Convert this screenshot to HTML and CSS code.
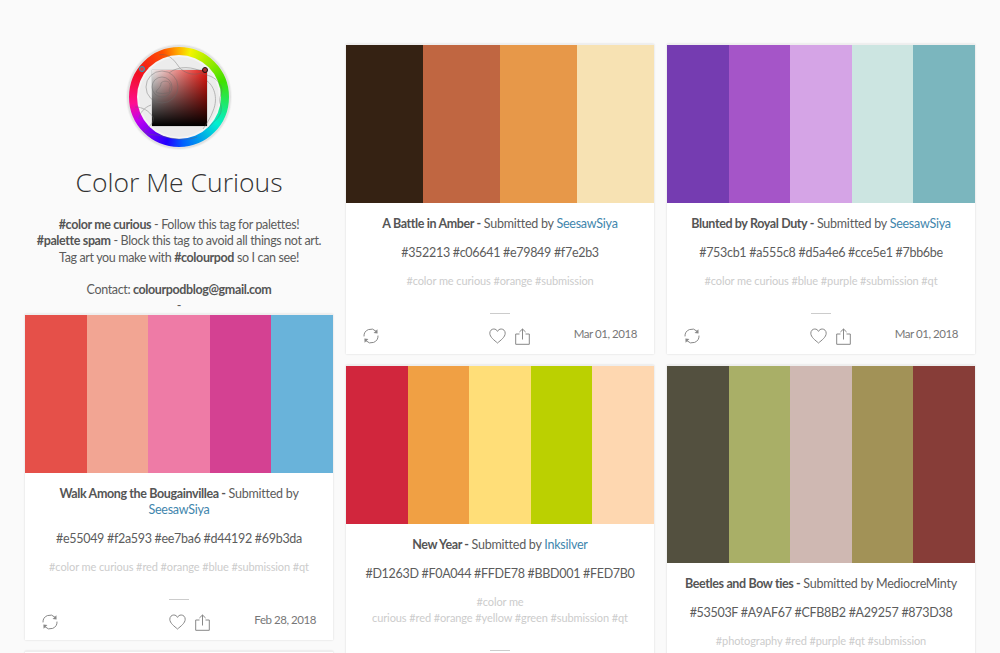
FILE: index.html
```html
<!DOCTYPE html>
<html lang="en">

<head>
  <meta charset="UTF-8">
  <meta name="viewport" content="width=device-width, initial-scale=1.0">
  <title>Color Me Curious</title>
  <link rel="stylesheet" href="styles.css">
</head>

<body>
  <svg class="icon-defs" width="0" height="0">
    <symbol id="i-reblog" viewBox="0 0 16 16">
      <path d="M1 8.400A7 7 0 0 1 13.200 3.400" />
      <path d="M15 7.600A7 7 0 0 1 2.800 12.600" />
      <path class="solid" d="M14.400 1.200 14.600 5.400 10.600 5Z" />
      <path class="solid" d="M1.600 14.800 1.400 10.600 5.400 11Z" />
    </symbol>
    <symbol id="i-heart" viewBox="0 0 17 16">
      <path d="M8.500 15C5.500 12.400.8 9.200.8 5.200.8 2.800 2.600 1 4.800 1c1.600 0 3 .9 3.700 2.400C9.200 1.900 10.600 1 12.200 1c2.200 0 4 1.800 4 4.200 0 4-4.700 7.200-7.700 9.800Z" />
    </symbol>
    <symbol id="i-share" viewBox="0 0 15 17">
      <path d="M4.500 6H.7v10.300h13.600V6h-3.800" />
      <path d="M7.500 11.500V1" />
      <path d="M4.400 4 7.500 1l3.100 3" />
    </symbol>
  </svg>

  <div class="page">
    <!-- left column, blog header first -->
    <div class="column">
      <div class="blog-head">
        <div class="logo">
          <div class="logo-ring"></div>
          <div class="logo-disc"></div>
          <div class="logo-square"></div>
          <svg class="logo-lines" viewBox="0 0 104 104">
            <circle cx="35" cy="42" r="16" />
            <circle cx="35" cy="42" r="10" />
            <path d="M34 38c3-3 8-2 9 1 1 4-2 5 0 8-4 2-11 2-14 0 1-3 5-4 5-9Z" />
            <path d="M32 10c8-2 14 3 20 12 5 6 14 9 22 6 6 3 14 2 20 13 3 8-4 10 0 20 2 10-6 14-13 22" />
            <path d="M42 28c10-8 24-6 34-1" />
            <path d="M80 36c6 4 12 16 6 30-2 6-6 12-10 18" />
            <path d="M8 62c8 0 14 4 18 10 2 6-6 12-10 14 6 6 14 2 22 6 10 2 22 4 32 0" />
            <path d="M24 60c-6 2-12 8-12 14" />
          </svg>
          <span class="logo-handle logo-handle-a"></span>
          <span class="logo-handle logo-handle-b"></span>
        </div>
        <h1 class="blog-title">Color Me Curious</h1>
        <p class="blog-desc">
          <b>#color me curious</b> - Follow this tag for palettes!<br>
          <b>#palette spam</b> - Block this tag to avoid all things not art.<br>
          Tag art you make with <b>#colourpod</b> so I can see!<br>
          <br>
          Contact: <b>colourpodblog@gmail.com</b><br>
          -
        </p>
      </div>

      <div class="card">
        <div class="swatches">
          <div class="swatch c-e55049"></div>
          <div class="swatch c-f2a593"></div>
          <div class="swatch c-ee7ba6"></div>
          <div class="swatch c-d44192"></div>
          <div class="swatch c-69b3da"></div>
        </div>
        <div class="card-body">
          <p class="card-title"><b>Walk Among the Bougainvillea -</b> Submitted by <a href="#">SeesawSiya</a></p>
          <p class="card-hex">#e55049 #f2a593 #ee7ba6 #d44192 #69b3da</p>
          <p class="card-tags">#color me curious #red #orange #blue #submission #qt</p>
          <div class="card-rule"></div>
          <div class="card-foot">
            <svg class="icon icon-reblog"><use href="#i-reblog" /></svg>
            <div class="foot-actions">
              <svg class="icon icon-heart"><use href="#i-heart" /></svg>
              <svg class="icon icon-share"><use href="#i-share" /></svg>
            </div>
            <span class="card-date">Feb 28, 2018</span>
          </div>
        </div>
      </div>

      <div class="card card-next"></div>
    </div>

    <!-- middle column -->
    <div class="column">
      <div class="card">
        <div class="swatches">
          <div class="swatch c-352213"></div>
          <div class="swatch c-c06641"></div>
          <div class="swatch c-e79849"></div>
          <div class="swatch c-f7e2b3"></div>
        </div>
        <div class="card-body">
          <p class="card-title"><b>A Battle in Amber -</b> Submitted by <a href="#">SeesawSiya</a></p>
          <p class="card-hex">#352213 #c06641 #e79849 #f7e2b3</p>
          <p class="card-tags">#color me curious #orange #submission</p>
          <div class="card-rule"></div>
          <div class="card-foot">
            <svg class="icon icon-reblog"><use href="#i-reblog" /></svg>
            <div class="foot-actions">
              <svg class="icon icon-heart"><use href="#i-heart" /></svg>
              <svg class="icon icon-share"><use href="#i-share" /></svg>
            </div>
            <span class="card-date">Mar 01, 2018</span>
          </div>
        </div>
      </div>

      <div class="card">
        <div class="swatches">
          <div class="swatch c-d1263d"></div>
          <div class="swatch c-f0a044"></div>
          <div class="swatch c-ffde78"></div>
          <div class="swatch c-bbd001"></div>
          <div class="swatch c-fed7b0"></div>
        </div>
        <div class="card-body">
          <p class="card-title"><b>New Year -</b> Submitted by <a href="#">Inksilver</a></p>
          <p class="card-hex">#D1263D #F0A044 #FFDE78 #BBD001 #FED7B0</p>
          <p class="card-tags">#color me<br>curious #red #orange #yellow #green #submission #qt</p>
          <div class="card-rule"></div>
        </div>
      </div>
    </div>

    <!-- right column -->
    <div class="column">
      <div class="card">
        <div class="swatches">
          <div class="swatch c-753cb1"></div>
          <div class="swatch c-a555c8"></div>
          <div class="swatch c-d5a4e6"></div>
          <div class="swatch c-cce5e1"></div>
          <div class="swatch c-7bb6be"></div>
        </div>
        <div class="card-body">
          <p class="card-title"><b>Blunted by Royal Duty -</b> Submitted by <a href="#">SeesawSiya</a></p>
          <p class="card-hex">#753cb1 #a555c8 #d5a4e6 #cce5e1 #7bb6be</p>
          <p class="card-tags">#color me curious #blue #purple #submission #qt</p>
          <div class="card-rule"></div>
          <div class="card-foot">
            <svg class="icon icon-reblog"><use href="#i-reblog" /></svg>
            <div class="foot-actions">
              <svg class="icon icon-heart"><use href="#i-heart" /></svg>
              <svg class="icon icon-share"><use href="#i-share" /></svg>
            </div>
            <span class="card-date">Mar 01, 2018</span>
          </div>
        </div>
      </div>

      <div class="card">
        <div class="swatches swatches-tall">
          <div class="swatch c-53503f"></div>
          <div class="swatch c-a9af67"></div>
          <div class="swatch c-cfb8b2"></div>
          <div class="swatch c-a29257"></div>
          <div class="swatch c-873d38"></div>
        </div>
        <div class="card-body">
          <p class="card-title"><b>Beetles and Bow ties -</b> Submitted by MediocreMinty</p>
          <p class="card-hex">#53503F #A9AF67 #CFB8B2 #A29257 #873D38</p>
          <p class="card-tags">#photography #red #purple #qt #submission</p>
          <div class="card-rule"></div>
        </div>
      </div>
    </div>
  </div>
</body>

</html>
```

FILE: styles.css
```css
html,
body {
  margin: 0;
  height: 100%;
  overflow: hidden;
}

body {
  background-color: #fafafa;
  color: #5c5c5c;
  font-family: "Lato", "Open Sans", sans-serif;
  font-size: 12.5px;
}

.icon-defs {
  display: block;
}

/* three fixed columns */
.page {
  display: flex;
  gap: 13px;
  padding: 44px 0 0 25px;
}

.column {
  width: 308px;
  display: flex;
  flex-direction: column;
  gap: 11px;
}

/* blog header */
.blog-head {
  height: 259px;
  text-align: center;
}

.logo {
  position: relative;
  width: 104px;
  height: 104px;
  margin: 1px auto 0;
}

.logo-ring {
  position: absolute;
  inset: 0;
  border-radius: 50%;
  background: conic-gradient(#ffb000 0deg, #f4f400 14deg, #40e000 70deg, #00f0d0 125deg, #0060ff 175deg, #2000ff 195deg, #c000f0 240deg, #ff1090 262deg, #f01020 300deg, #ff5000 340deg, #ffb000 360deg);
  border: 2px solid #e2e2e2;
  box-sizing: border-box;
  box-shadow: 0 0 0 1px #f2f2f2;
}

.logo-disc {
  position: absolute;
  inset: 12px;
  border-radius: 50%;
  background-color: #ececec;
  box-shadow: 0 0 0 2px #f4f4f4;
}

.logo-square {
  position: absolute;
  left: 25px;
  top: 25px;
  width: 55px;
  height: 56px;
  background: linear-gradient(to top, #000, rgba(0, 0, 0, 0)), linear-gradient(to right, rgba(235, 235, 235, 0.85), #e8160f);
  box-shadow: 0 0 1px #777;
}

.logo-lines {
  position: absolute;
  inset: 0;
  fill: none;
  stroke: #666;
  stroke-width: 0.8;
  opacity: 0.5;
}

.logo-handle {
  position: absolute;
  width: 4px;
  height: 4px;
  border-radius: 50%;
  border: 1px solid;
}

.logo-handle-a {
  left: 12px;
  top: 21px;
  border-color: #18a8c8;
  background-color: #e04040;
}

.logo-handle-b {
  left: 75px;
  top: 22px;
  border-color: #111;
  background-color: #a83030;
}

.blog-title {
  margin: 14px 0 0;
  color: #333;
  font-family: "Open Sans", sans-serif;
  font-size: 26.5px;
  font-weight: 300;
  line-height: 38px;
}

.blog-desc {
  margin: 16px 0 0;
  line-height: 16.3px;
  letter-spacing: -0.36px;
}

b {
  color: #555;
  font-weight: 700;
  letter-spacing: -0.38px;
}

/* palette card */
.card {
  border-top: 1px solid #eee;
  background-color: #fff;
  box-shadow: 0 0 2px rgba(0, 0, 0, 0.14);
}

.card-next {
  height: 60px;
  flex: none;
}

.swatches {
  display: flex;
  height: 158px;
}

.swatches-tall {
  height: 197px;
}

.swatch {
  flex: 1;
}

.card-body {
  padding: 13px 17px 3px;
  text-align: center;
}

.card-title,
.card-hex,
.card-tags {
  margin: 0;
  line-height: 16px;
}

.card-title {
  letter-spacing: -0.24px;
}

.card-title a {
  color: #3f86ad;
  text-decoration: none;
}

.card-hex {
  margin-top: 13px;
  letter-spacing: -0.3px;
}

.card-tags {
  margin-top: 12px;
  color: #ccc;
  font-size: 11px;
  letter-spacing: -0.1px;
}

.card-rule {
  width: 20px;
  height: 1px;
  margin: 24px auto 0;
  background-color: #ccc;
}

.card-foot {
  display: flex;
  align-items: center;
  height: 30px;
  margin-top: 7px;
}

.foot-actions {
  display: flex;
  gap: 9px;
  margin-left: auto;
}

.card-date {
  margin: -6px 0 0 44px;
  color: #777;
  font-size: 11.5px;
  letter-spacing: -0.45px;
}

.icon {
  display: block;
  fill: none;
  stroke: #888;
  stroke-width: 1;
}

.solid {
  fill: #888;
  stroke: none;
}

.icon-reblog {
  width: 16px;
  height: 16px;
}

.icon-heart {
  width: 17px;
  height: 16px;
}

.icon-share {
  width: 15px;
  height: 17px;
}

/* swatch colours */
.c-e55049 { background-color: #e55049; }
.c-f2a593 { background-color: #f2a593; }
.c-ee7ba6 { background-color: #ee7ba6; }
.c-d44192 { background-color: #d44192; }
.c-69b3da { background-color: #69b3da; }
.c-352213 { background-color: #352213; }
.c-c06641 { background-color: #c06641; }
.c-e79849 { background-color: #e79849; }
.c-f7e2b3 { background-color: #f7e2b3; }
.c-d1263d { background-color: #d1263d; }
.c-f0a044 { background-color: #f0a044; }
.c-ffde78 { background-color: #ffde78; }
.c-bbd001 { background-color: #bbd001; }
.c-fed7b0 { background-color: #fed7b0; }
.c-753cb1 { background-color: #753cb1; }
.c-a555c8 { background-color: #a555c8; }
.c-d5a4e6 { background-color: #d5a4e6; }
.c-cce5e1 { background-color: #cce5e1; }
.c-7bb6be { background-color: #7bb6be; }
.c-53503f { background-color: #53503f; }
.c-a9af67 { background-color: #a9af67; }
.c-cfb8b2 { background-color: #cfb8b2; }
.c-a29257 { background-color: #a29257; }
.c-873d38 { background-color: #873d38; }
```
